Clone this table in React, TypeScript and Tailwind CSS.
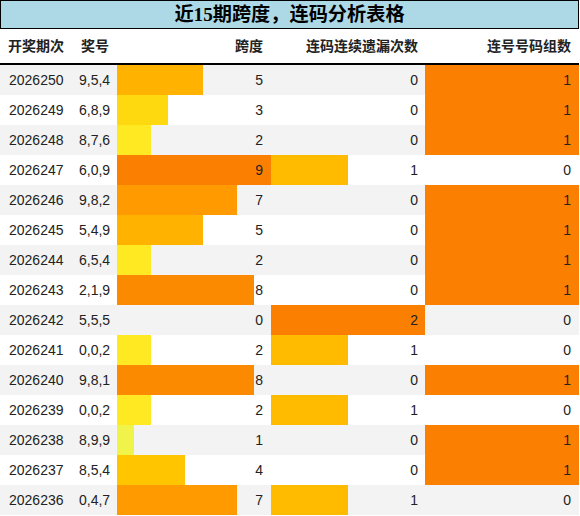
import React from 'react';

const rows: [string, string, number, number, number][] = [
  ['2026250', '9,5,4', 5, 0, 1],
  ['2026249', '6,8,9', 3, 0, 1],
  ['2026248', '8,7,6', 2, 0, 1],
  ['2026247', '6,0,9', 9, 1, 0],
  ['2026246', '9,8,2', 7, 0, 1],
  ['2026245', '5,4,9', 5, 0, 1],
  ['2026244', '6,5,4', 2, 0, 1],
  ['2026243', '2,1,9', 8, 0, 1],
  ['2026242', '5,5,5', 0, 2, 0],
  ['2026241', '0,0,2', 2, 1, 0],
  ['2026240', '9,8,1', 8, 0, 1],
  ['2026239', '0,0,2', 2, 1, 0],
  ['2026238', '8,9,9', 1, 0, 1],
  ['2026237', '8,5,4', 4, 0, 1],
  ['2026236', '0,4,7', 7, 1, 0],
];

const spanColors: Record<number, string> = {
  1: '#eff34a',
  2: '#ffe922',
  3: '#ffd90f',
  4: '#ffc600',
  5: '#ffb300',
  6: '#ffa700',
  7: '#ff9b00',
  8: '#fc8a00',
  9: '#fb7f00',
};

function barStyle(value: number, max: number, color: string | undefined) {
  if (!value || !color) return {};
  const pct = (value / max) * 100;
  return { background: `linear-gradient(to right, ${color} ${pct}%, transparent ${pct}%)` };
}

export default function App() {
  return (
    <div
      className="w-[579px] text-[#222] bg-white"
      style={{ fontFamily: '"Liberation Sans", "Noto Sans CJK SC", sans-serif' }}
    >
      <div
        className="h-[29px] border border-black bg-[#add8e6] flex items-center justify-center text-[19.2px] font-bold text-black leading-none"
        style={{ fontFamily: '"Liberation Serif", "Noto Sans CJK SC", serif' }}
      >
        近15期跨度，连码分析表格
      </div>
      <div className="grid grid-cols-[71px_46px_154px_154px_154px] h-[36px] border-b-2 border-black text-[14px] font-bold items-center">
        <div className="pl-2">开奖期次</div>
        <div className="pl-[10px]">奖号</div>
        <div className="text-right pr-2">跨度</div>
        <div className="text-right pr-[7px]">连码连续遗漏次数</div>
        <div className="text-right pr-2">连号号码组数</div>
      </div>
      {rows.map((r, i) => (
        <div
          key={r[0]}
          className={`grid grid-cols-[71px_46px_154px_154px_154px] h-[30px] text-[14px] ${i % 2 === 0 ? 'bg-[#f3f3f3]' : 'bg-white'}`}
        >
          <div className="pl-[9px] flex items-center">{r[0]}</div>
          <div className="pl-2 flex items-center">{r[1]}</div>
          <div className="pr-2 flex items-center justify-end" style={barStyle(r[2], 9, spanColors[r[2]])}>
            {r[2]}
          </div>
          <div
            className="pr-[7px] flex items-center justify-end"
            style={barStyle(r[3], 2, r[3] === 2 ? '#fb7f00' : '#ffbb00')}
          >
            {r[3]}
          </div>
          <div className="pr-2 flex items-center justify-end" style={barStyle(r[4], 1, '#fb7f00')}>
            {r[4]}
          </div>
        </div>
      ))}
    </div>
  );
}
